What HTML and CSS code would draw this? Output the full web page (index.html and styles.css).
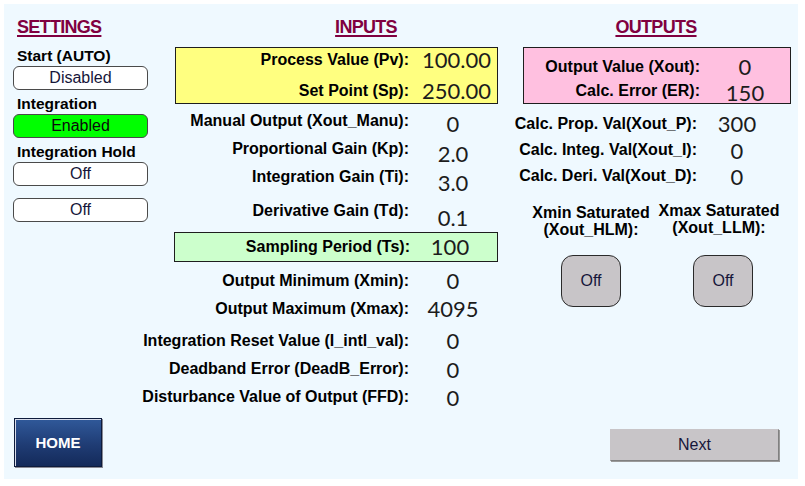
FILE: index.html
```html
<!DOCTYPE html>
<html lang="en">
<head>
<meta charset="utf-8">
<title>PID Settings</title>
<link rel="stylesheet" href="styles.css">
</head>
<body>
<div class="panel">
  <section class="col settings">
    <h2 class="title">SETTINGS</h2>
    <div class="field-label">Start (AUTO)</div>
    <div class="toggle">Disabled</div>
    <div class="field-label">Integration</div>
    <div class="toggle on">Enabled</div>
    <div class="field-label">Integration Hold</div>
    <div class="toggle">Off</div>
    <div class="toggle spaced">Off</div>
    <button class="home">HOME</button>
  </section>

  <section class="col inputs">
    <h2 class="title title-inputs">INPUTS</h2>
    <div class="box box-yellow">
      <div class="row box-row"><span class="lbl">Process Value (Pv):</span><span class="val">100.00</span></div>
      <div class="row box-row gap7"><span class="lbl">Set Point (Sp):</span><span class="val">250.00</span></div>
    </div>
    <div class="row mt3"><span class="lbl">Manual Output (Xout_Manu):</span><span class="val drop5">0</span></div>
    <div class="row"><span class="lbl">Proportional Gain (Kp):</span><span class="val drop10">2.0</span></div>
    <div class="row"><span class="lbl">Integration Gain (Ti):</span><span class="val drop12">3.0</span></div>
    <div class="row mt6"><span class="lbl">Derivative Gain (Td):</span><span class="val drop13">0.1</span></div>
    <div class="box box-green">
      <div class="row"><span class="lbl">Sampling Period (Ts):</span><span class="val">100</span></div>
    </div>
    <div class="row mt5"><span class="lbl">Output Minimum (Xmin):</span><span class="val">0</span></div>
    <div class="row"><span class="lbl">Output Maximum (Xmax):</span><span class="val">4095</span></div>
    <div class="row mt4"><span class="lbl">Integration Reset Value (I_intl_val):</span><span class="val">0</span></div>
    <div class="row"><span class="lbl">Deadband Error (DeadB_Error):</span><span class="val drop2">0</span></div>
    <div class="row"><span class="lbl">Disturbance Value of Output (FFD):</span><span class="val drop2">0</span></div>
  </section>

  <section class="col outputs">
    <h2 class="title title-outputs">OUTPUTS</h2>
    <div class="box box-pink">
      <div class="orow"><span class="lbl">Output Value (Xout):</span><span class="val">0</span></div>
      <div class="orow"><span class="lbl">Calc. Error (ER):</span><span class="val drop3">150</span></div>
    </div>
    <div class="calc">
      <div class="crow"><span class="lbl">Calc. Prop. Val(Xout_P):</span><span class="val">300</span></div>
      <div class="crow"><span class="lbl">Calc. Integ. Val(Xout_I):</span><span class="val drop2">0</span></div>
      <div class="crow"><span class="lbl">Calc. Deri. Val(Xout_D):</span><span class="val drop2">0</span></div>
    </div>
    <div class="sats">
      <div class="sat">
        <div class="sat-label">Xmin Saturated<br>(Xout_HLM):</div>
        <div class="sat-btn">Off</div>
      </div>
      <div class="sat sat-raised">
        <div class="sat-label">Xmax Saturated<br>(Xout_LLM):</div>
        <div class="sat-btn nudge">Off</div>
      </div>
    </div>
    <button class="next">Next</button>
  </section>
</div>
</body>
</html>
```

FILE: styles.css
```css
* { box-sizing: border-box; }

html, body {
  margin: 0;
  padding: 0;
  background: #ffffff;
}

body {
  font-family: "Liberation Sans", Arial, sans-serif;
  color: #000;
  padding: 4px;
}

.panel {
  width: 794px;
  height: 475px;
  background: #eff9ff;
  display: grid;
  grid-template-columns: 156px 350px 1fr;
  padding: 12px 0 12px 0;
}

.col {
  display: flex;
  flex-direction: column;
  min-width: 0;
}

.title {
  margin: 0 0 9px 0;
  font-size: 18px;
  line-height: 22px;
  font-weight: bold;
  letter-spacing: -0.7px;
  color: #800040;
  text-decoration: underline;
  text-decoration-thickness: 2px;
  text-underline-offset: 2px;
}

/* ---------- settings ---------- */
.settings { padding-left: 9px; }
.settings .title { padding-left: 4px; }

.field-label {
  font-size: 15.5px;
  font-weight: bold;
  line-height: 18px;
  padding-left: 4px;
  margin-bottom: 1px;
  white-space: nowrap;
}

.toggle {
  width: 135px;
  height: 24px;
  border: 1px solid #4a4a4a;
  border-radius: 6px;
  background: #ffffff;
  text-align: center;
  font-size: 16px;
  line-height: 22px;
  color: #16163a;
  margin-bottom: 5px;
}
.toggle.on { background: #00ff00; color: #0a0a0a; }
.toggle.spaced { margin-top: 7px; }

.home {
  margin-top: auto;
  margin-left: 1px;
  width: 88px;
  height: 49px;
  border: 1px solid #0e1c3c;
  box-shadow: inset 1px 1px 0 #d8dcea, 1px 1px 0 #8a8a94;
  background: linear-gradient(#30599a, #1f3c74 55%, #142a5a);
  color: #ffffff;
  font-family: "Liberation Sans", Arial, sans-serif;
  font-size: 15px;
  font-weight: bold;
  padding: 0;
}

/* ---------- shared rows ---------- */
.row, .orow, .crow {
  display: flex;
  align-items: center;
}

.lbl {
  flex: none;
  display: flex;
  justify-content: flex-end;
  white-space: nowrap;
  font-size: 16px;
  font-weight: bold;
  line-height: 18px;
}

.val {
  flex: none;
  font-family: Lato, "Noto Sans", sans-serif;
  font-size: 22px;
  line-height: 18px;
  color: #1c1c1c;
  text-align: center;
  white-space: nowrap;
}

/* ---------- inputs ---------- */
.title-inputs { text-align: center; padding-left: 62px; }

.row { height: 28px; }
.row .lbl { width: 249px; }
.row .val { width: 88px; }

.box {
  border: 1px solid #1e1e1e;
}
.box-yellow {
  margin-left: 15px;
  width: 323px;
  height: 57px;
  background: #ffff80;
}
.box-yellow .row { height: 24px; }
.box-yellow .lbl { width: 233px; }
.box-yellow .val { padding-left: 7px; }
.gap7 { margin-top: 7px; }

.box-green {
  margin-top: 7px;
  margin-left: 14px;
  width: 324px;
  height: 30px;
  background: #ccffcc;
}
.box-green .lbl { width: 235px; }
.box-green .val { padding-right: 8px; }

.mt3 { margin-top: 3px; }
.mt4 { margin-top: 4px; }
.mt5 { margin-top: 5px; }
.mt6 { margin-top: 6px; }

.drop2 { padding-top: 2px; }
.drop3 { padding-top: 3px; }
.drop5 { padding-top: 5px; }
.drop10 { padding-top: 10px; }
.drop12 { padding-top: 12px; }
.drop13 { padding-top: 13px; }

/* ---------- outputs ---------- */
.title-outputs { text-align: center; padding-left: 4px; }

.box-pink {
  margin-left: 13px;
  width: 268px;
  height: 57px;
  background: #ffc0e0;
  padding-top: 7px;
}

.orow { height: 24px; }
.orow .lbl { width: 176px; }
.orow .val { width: 90px; }

.calc { margin-top: 7px; }

.crow { height: 26px; }
.crow .lbl { width: 187px; }
.crow .val { width: 80px; }

.sats {
  display: flex;
  margin-top: 15px;
  margin-left: 17px;
}

.sat {
  width: 128px;
  display: flex;
  flex-direction: column;
  align-items: center;
}
.sat-raised .sat-label { margin-top: -2px; margin-bottom: 2px; }

.sat-label {
  font-size: 16px;
  font-weight: bold;
  line-height: 17px;
  text-align: center;
  white-space: nowrap;
}

.sat-btn {
  margin-top: 17px;
  width: 60px;
  height: 52px;
  border: 1px solid #2a2a2a;
  border-radius: 12px;
  background: #c8c5c8;
  font-size: 16px;
  line-height: 50px;
  text-align: center;
  color: #16163a;
}
.sat-btn.nudge { margin-left: 8px; }

.next {
  margin-top: auto;
  margin-bottom: 6px;
  margin-left: 100px;
  width: 169px;
  height: 32px;
  background: #c8c5c8;
  border: 1px solid #c8c5c8;
  border-right-color: #808080;
  border-bottom-color: #808080;
  box-shadow: 1px 1px 0 #9a9a9a;
  font-family: "Liberation Sans", Arial, sans-serif;
  font-size: 16px;
  color: #16163a;
  padding: 0;
}
```
